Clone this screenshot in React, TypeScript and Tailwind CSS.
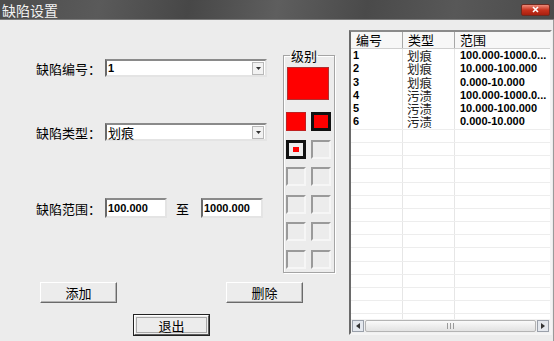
import React from "react";

const num = "font-['Liberation_Sans',Arial,sans-serif] font-bold text-[11px]";

function Combo({ value, bold }: { value: string; bold?: boolean }) {
  return (
    <div className="w-[162px] h-full bg-white flex items-center border-2 border-t-[#8a8a8a] border-l-[#6a6a6a] border-r-[#e4e4e4] border-b-[#e4e4e4]">
      <span className={(bold ? num : "text-[13px]") + " flex-1 pl-[1px] leading-none"}>{value}</span>
      <div className="w-[12px] h-[13px] mr-[1px] bg-[#f2f2f2] border border-[#b8b8b8] flex items-center justify-center">
        <svg width="5" height="3" viewBox="0 0 5 3"><path d="M0 0h5L2.5 3z" fill="#333" /></svg>
      </div>
    </div>
  );
}

function Field({ value }: { value: string }) {
  return (
    <div className="w-[62px] h-full bg-white flex items-center border-2 border-t-[#8a8a8a] border-l-[#6a6a6a] border-r-[#e4e4e4] border-b-[#e4e4e4]">
      <span className={num + " pl-[1px] leading-none"}>{value}</span>
    </div>
  );
}

function Btn({ label, def }: { label: string; def?: boolean }) {
  if (def) {
    return (
      <div className="w-[77px] h-[22px] border border-[#222] bg-[#ececec]">
        <div className="w-full h-full border border-t-white border-l-white border-r-[#5a5a5a] border-b-[#5a5a5a] p-[1px]">
          <div className="w-full h-full border border-[#a8a8a8] flex items-center justify-center text-[13px] leading-none">
            {label}
          </div>
        </div>
      </div>
    );
  }
  return (
    <div className="w-[77px] h-[21px] bg-[#ececec] border border-t-white border-l-white border-r-[#6a6a6a] border-b-[#6a6a6a] shadow-[inset_-1px_-1px_0_#b4b4b4] flex items-center justify-center text-[13px] leading-none">
      {label}
    </div>
  );
}

function EmptyCell() {
  return (
    <div className="w-[20px] h-[19px] border-2 border-t-[#9a9a9a] border-l-[#9a9a9a] border-r-[#f6f6f6] border-b-[#f6f6f6]" />
  );
}

const rows = [
  ["1", "划痕", "100.000-1000.0..."],
  ["2", "划痕", "10.000-100.000"],
  ["3", "划痕", "0.000-10.000"],
  ["4", "污渍", "100.000-1000.0..."],
  ["5", "污渍", "10.000-100.000"],
  ["6", "污渍", "0.000-10.000"],
];

export default function App() {
  const empties = Array.from({ length: 22 });
  return (
    <div className="w-[554px] h-[341px] overflow-hidden flex flex-col bg-[#ececec] font-['Noto_Sans_CJK_SC','Noto_Sans',sans-serif] text-[13px] text-black">
      <div className="h-[20px] shrink-0 flex items-center justify-between bg-[linear-gradient(100deg,#4d4d4d_0%,#5a5a5a_18%,#474747_34%,#5e5e5e_50%,#4a4a4a_66%,#585858_82%,#4b4b4b_100%)] border-b border-[#7c7c7c]">
        <span className="pl-[2px] text-[14px] leading-none text-[#f2f2f2]">缺陷设置</span>
        <div className="mr-[4px] w-[29px] h-[12px] rounded-[2px] bg-[linear-gradient(#ec8a78,#c8321e_50%,#a8200f)] border border-[#6e2a20] flex items-center justify-center">
          <svg width="7" height="7" viewBox="0 0 7 7"><path d="M1 1l5 5M6 1l-5 5" stroke="#fff" strokeWidth="1.6" /></svg>
        </div>
      </div>
      <div className="flex-1 flex border-r border-[#9a9a9a]">
        <div className="w-[349px] flex flex-col">
          <div className="h-[252px] flex">
            <div className="w-[283px] flex flex-col">
              <div className="mt-[39px] h-[18px] flex items-center">
                <span className="w-[105px] pl-[36px] leading-none">缺陷编号：</span>
                <Combo value="1" bold />
              </div>
              <div className="mt-[46px] h-[18px] flex items-center">
                <span className="w-[105px] pl-[36px] leading-none">缺陷类型：</span>
                <Combo value="划痕" />
              </div>
              <div className="mt-[57px] h-[20px] flex items-center">
                <span className="w-[105px] pl-[36px] leading-none">缺陷范围：</span>
                <Field value="100.000" />
                <span className="ml-[9px] w-[25px] leading-none">至</span>
                <Field value="1000.000" />
              </div>
            </div>
            <fieldset className="mt-[29px] self-start w-[52px] border border-[#a4a4a4] shadow-[1px_1px_0_#fff,inset_1px_1px_0_#fff] pl-[2px] pb-[3px]">
              <legend className="ml-[4px] px-[1px] text-[13px] leading-[13px]">级别</legend>
              <div className="ml-[1px] mt-[5px] w-[42px] h-[33px] bg-[#ff0000] border border-[#b03030]" />
              <div className="mt-[12px] grid grid-cols-[20px_20px] gap-x-[5px] gap-y-[8.6px]">
                <div className="w-[20px] h-[19px] bg-[#ff0000] border border-[#c02020]" />
                <div className="w-[20px] h-[19px] bg-[#ff0000] border-[3px] border-[#111]" />
                <div className="w-[20px] h-[19px] bg-[#111] p-[3px] flex items-center justify-center">
                  <div className="w-[14px] h-[13px] bg-[#ececec] flex items-center justify-center">
                    <div className="w-[6px] h-[5px] bg-[#ff0000]" />
                  </div>
                </div>
                <EmptyCell />
                <EmptyCell />
                <EmptyCell />
                <EmptyCell />
                <EmptyCell />
                <EmptyCell />
                <EmptyCell />
                <EmptyCell />
                <EmptyCell />
              </div>
            </fieldset>
          </div>
          <div className="mt-[10px] h-[21px] flex">
            <div className="ml-[40px]"><Btn label="添加" /></div>
            <div className="ml-[109px]"><Btn label="删除" /></div>
          </div>
          <div className="mt-[11px] ml-[133px]">
            <Btn label="退出" def />
          </div>
        </div>
        <div className="mt-[10px] w-[203px] h-[305px] bg-white flex flex-col border-2 border-t-[#8a8a8a] border-l-[#6a6a6a] border-r-[#f4f4f4] border-b-[#f4f4f4]">
          <div className="h-[17px] shrink-0 flex bg-[#f7f7f7] border-b border-[#cfcfcf] leading-[15px]">
            <div className="w-[52px] pl-[5px] border-r border-[#a8a8a8]">编号</div>
            <div className="w-[52px] pl-[5px] border-r border-[#a8a8a8]">类型</div>
            <div className="flex-1 pl-[5px]">范围</div>
          </div>
          <div className="flex-1 overflow-hidden">
            {rows.map((r) => (
              <div key={r[0]} className="h-[13.3px] flex leading-[13px]">
                <div className={num + " w-[52px] pl-[2px] border-r border-[#e6e6e6]"}>{r[0]}</div>
                <div className="w-[52px] pl-[4px] border-r border-[#e6e6e6] text-[12.5px] text-[#222]">{r[1]}</div>
                <div className={num + " flex-1 pl-[5px] whitespace-nowrap"}>{r[2]}</div>
              </div>
            ))}
            {empties.map((_, i) => (
              <div key={i} className="h-[13.2px] flex border-t border-[#ededed]">
                <div className="w-[52px] border-r border-[#e6e6e6]" />
                <div className="w-[52px] border-r border-[#e6e6e6]" />
                <div className="flex-1" />
              </div>
            ))}
          </div>
          <div className="h-[14px] shrink-0 flex items-center bg-[#f0f0f0] px-[1px] gap-[1px]">
            <div className="w-[12px] h-[12px] bg-[#e4e8ee] border border-[#9aa0aa] flex items-center justify-center">
              <svg width="4" height="6" viewBox="0 0 4 6"><path d="M4 0v6L0 3z" fill="#333" /></svg>
            </div>
            <div className="flex-1 h-[12px] bg-[linear-gradient(#fafafa,#e2e2e2)] border border-[#b4b4b4] rounded-[2px] flex items-center justify-center">
              <svg width="7" height="6" viewBox="0 0 7 6"><path d="M0.5 0v6M3.5 0v6M6.5 0v6" stroke="#9a9a9a" strokeWidth="1" /></svg>
            </div>
            <div className="w-[12px] h-[12px] bg-[#e4e8ee] border border-[#9aa0aa] flex items-center justify-center">
              <svg width="4" height="6" viewBox="0 0 4 6"><path d="M0 0v6L4 3z" fill="#333" /></svg>
            </div>
          </div>
        </div>
      </div>
    </div>
  );
}
